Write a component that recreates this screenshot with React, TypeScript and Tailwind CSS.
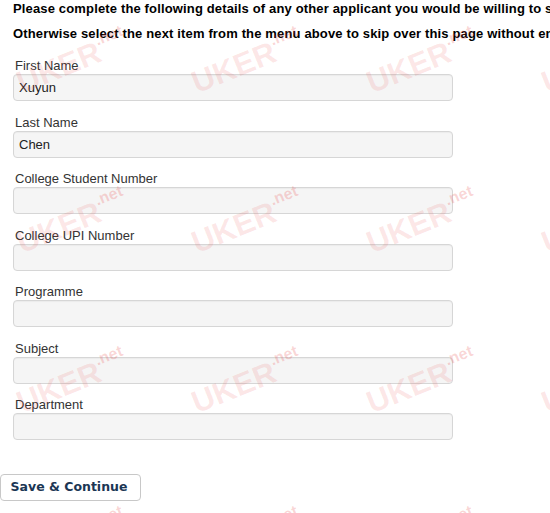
const fields = [
  { label: "First Name", value: "Xuyun" },
  { label: "Last Name", value: "Chen" },
  { label: "College Student Number", value: "" },
  { label: "College UPI Number", value: "" },
  { label: "Programme", value: "" },
  { label: "Subject", value: "" },
  { label: "Department", value: "" },
]

// faint site watermark tiled over the page
const marks: { x: number; y: number }[] = []
for (let row = 0; row < 4; row++) {
  for (let col = 0; col < 4; col++) {
    marks.push({ x: 72 + col * 175, y: 62 + row * 160 })
  }
}

function Watermark() {
  return (
    <div className="pointer-events-none absolute inset-0 overflow-hidden">
      {marks.map((m, i) => (
        <div
          key={i}
          className="absolute flex -translate-x-1/2 -translate-y-1/2 -rotate-[22deg] items-start whitespace-nowrap font-['Liberation_Sans',Arial,sans-serif] font-bold"
          style={{ left: m.x, top: m.y }}
        >
          <span className="text-[31px] leading-none text-[rgba(232,70,70,0.13)]">UKER</span>
          <span className="mt-[-3px] text-[16px] leading-none text-[rgba(232,70,70,0.22)]">.net</span>
        </div>
      ))}
    </div>
  )
}

export default function App() {
  return (
    <div className="relative h-[513px] w-[550px] overflow-hidden bg-white font-['Liberation_Sans',Arial,sans-serif]">
      <div className="pt-[1px]">
        <p className="whitespace-nowrap pl-[13px] text-[13px] font-bold leading-[15px] tracking-[0.15px] text-black">
          Please complete the following details of any other applicant you would be willing to share with.
        </p>
        <p className="mt-[10px] whitespace-nowrap pl-[13px] text-[13px] font-bold leading-[15px] tracking-[0.15px] text-black">
          Otherwise select the next item from the menu above to skip over this page without entering any details.
        </p>

        <form className="mt-[17px] pl-[13px]" onSubmit={(e) => e.preventDefault()}>
          {fields.map((f) => (
            <div key={f.label} className="mb-[13.5px]">
              <label className="block pl-[2px] text-[13px] leading-[16px] text-[#333]">{f.label}</label>
              <input
                type="text"
                defaultValue={f.value}
                className="block h-[27px] w-[440px] rounded-[4px] border border-[#d6d6d6] bg-[#f5f5f5] px-[5px] text-[13px] text-[#222] shadow-[inset_0_1px_1px_rgba(0,0,0,0.04)] outline-none"
              />
            </div>
          ))}
        </form>
      </div>

      <div className="mt-[34px]">
        <button
          type="button"
          className="h-[27px] w-[141px] rounded-[4px] border border-[#c8c8c8] bg-white pr-[3px] font-['DejaVu_Sans',Verdana,sans-serif] text-[12.5px] font-bold text-[#1b3654]"
        >
          Save &amp; Continue
        </button>
      </div>

      <Watermark />
    </div>
  )
}
